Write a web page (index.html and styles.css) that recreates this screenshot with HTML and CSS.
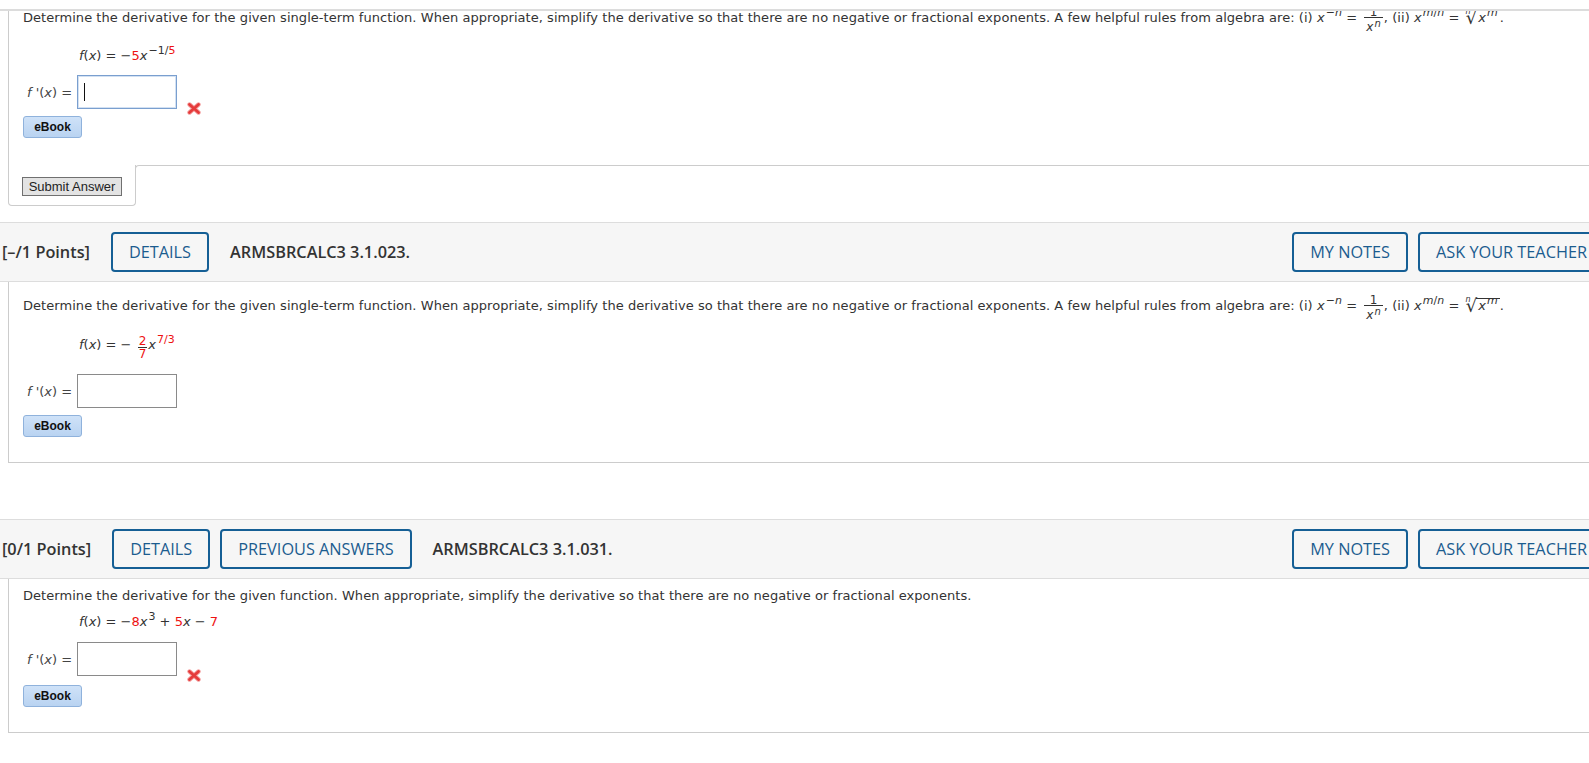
FILE: index.html
```html
<!DOCTYPE html>
<html>
<head>
<meta charset="utf-8">
<link rel="stylesheet" href="styles.css">
</head>
<body>
<div class="page">
  <div class="topline"></div>
  <div class="clip">
    <div class="q1">
      <div class="q1-body">
        <p class="qtext">Determine the derivative for the given single-term function. When appropriate, simplify the derivative so that there are no negative or fractional exponents. A few helpful rules from algebra are: (i) <i>x</i><span class="sup">−<i>n</i></span> = <span class="frac"><span class="num">1</span><span class="den"><i>x</i><span class="sup s2"><i>n</i></span></span></span>, (ii) <i>x</i><span class="sup"><i>m</i>/<i>n</i></span> = <span class="root"><span class="idx"><i>n</i></span><span class="rsign">√</span><span class="rad plain"><i>x</i><span class="sup"><i>m</i></span></span></span>.</p>
        <div class="fx"><i>f</i>(<i>x</i>) = −<span class="red">5</span><i>x</i><span class="sup">−1/<span class="red">5</span></span></div>
        <div class="answer">
          <span class="lbl"><i>f</i> '(<i>x</i>) =</span>
          <span class="field"><input class="inp focus" type="text"><span class="caret"></span></span>
          <svg class="wrong" width="14" height="13" viewBox="0 0 14 13"><path d="M2.5 2.5 L11.5 10.5 M11.5 2.5 L2.5 10.5" stroke="#f4a0a0" stroke-width="4.4" stroke-linecap="round"/><path d="M2.5 2.5 L11.5 10.5 M11.5 2.5 L2.5 10.5" stroke="#e53b3b" stroke-width="2.8" stroke-linecap="round"/></svg>
        </div>
        <button class="ebook">eBook</button>
      </div>
      <div class="submit-row">
        <div class="tab"><button class="submit">Submit Answer</button></div>
        <div class="filler"></div>
      </div>
    </div>
  </div>

  <div class="qhead">
    <span class="pts">[–/1 Points]</span>
    <span class="btns"><span class="hbtn">DETAILS</span></span>
    <span class="title">ARMSBRCALC3 3.1.023.</span>
    <span class="right"><span class="hbtn">MY NOTES</span><span class="hbtn">ASK YOUR TEACHER</span></span>
  </div>
  <div class="qbody sec2">
    <p class="qtext">Determine the derivative for the given single-term function. When appropriate, simplify the derivative so that there are no negative or fractional exponents. A few helpful rules from algebra are: (i) <i>x</i><span class="sup">−<i>n</i></span> = <span class="frac"><span class="num">1</span><span class="den"><i>x</i><span class="sup s2"><i>n</i></span></span></span>, (ii) <i>x</i><span class="sup"><i>m</i>/<i>n</i></span> = <span class="root"><span class="idx"><i>n</i></span><span class="rsign">√</span><span class="rad"><i>x</i><span class="sup"><i>m</i></span></span></span>.</p>
    <div class="fx"><i>f</i>(<i>x</i>) = − <span class="frac big"><span class="num red">2</span><span class="den red">7</span></span><i>x</i><span class="sup red">7/3</span></div>
    <div class="answer">
      <span class="lbl"><i>f</i> '(<i>x</i>) =</span>
      <span class="field"><input class="inp" type="text"></span>
    </div>
    <button class="ebook">eBook</button>
  </div>

  <div class="qhead second">
    <span class="pts">[0/1 Points]</span>
    <span class="btns"><span class="hbtn">DETAILS</span><span class="hbtn">PREVIOUS ANSWERS</span></span>
    <span class="title">ARMSBRCALC3 3.1.031.</span>
    <span class="right"><span class="hbtn">MY NOTES</span><span class="hbtn">ASK YOUR TEACHER</span></span>
  </div>
  <div class="qbody sec3">
    <p class="qtext">Determine the derivative for the given function. When appropriate, simplify the derivative so that there are no negative or fractional exponents.</p>
    <div class="fx"><i>f</i>(<i>x</i>) = −<span class="red">8</span><i>x</i><span class="sup">3</span> + <span class="red">5</span><i>x</i> − <span class="red">7</span></div>
    <div class="answer">
      <span class="lbl"><i>f</i> '(<i>x</i>) =</span>
      <span class="field"><input class="inp" type="text"></span>
      <svg class="wrong" width="14" height="13" viewBox="0 0 14 13"><path d="M2.5 2.5 L11.5 10.5 M11.5 2.5 L2.5 10.5" stroke="#f4a0a0" stroke-width="4.4" stroke-linecap="round"/><path d="M2.5 2.5 L11.5 10.5 M11.5 2.5 L2.5 10.5" stroke="#e53b3b" stroke-width="2.8" stroke-linecap="round"/></svg>
    </div>
    <button class="ebook">eBook</button>
  </div>
</div>
</body>
</html>
```

FILE: styles.css
```css
html, body {
  margin: 0;
  padding: 0;
  overflow: hidden;
  background: #fff;
}
.page {
  width: 1609px;
  font-family: "DejaVu Sans", Verdana, sans-serif;
  font-size: 13px;
  color: #333;
}
.topline {
  margin-top: 9px;
  height: 2px;
  background: #dcdcdc;
}
.clip {
  overflow: hidden;
  margin-bottom: 16px;
}
.q1 {
  margin-left: 8px;
}
.q1-body {
  margin-top: -17px;
  border-left: 1px solid #ccc;
  padding: 14px 0 27px 14px;
}
.qtext {
  margin: 0;
  line-height: 16px;
  letter-spacing: 0.05px;
}
.sup {
  font-size: 11px;
  vertical-align: 6px;
  line-height: 0;
  margin-left: 1px;
}
.sup.s2 {
  vertical-align: 4px;
  font-size: 10px;
}
.frac {
  display: inline-flex;
  flex-direction: column;
  align-items: center;
  vertical-align: 6px;
  font-size: 12px;
  margin: 0 1px 0 3px;
}
.frac .num {
  line-height: 9px;
  padding: 0 2px;
}
.frac .den {
  border-top: 1px solid #333;
  line-height: 14px;
  padding: 2px 2px 0;
}
.frac.big {
  font-size: 12px;
  vertical-align: 4px;
  margin: 0 1px 0 2px;
}
.frac.big .num { line-height: 11px; padding: 0 1px; }
.frac.big .den { line-height: 11px; padding: 1px 1px 0; border-top-color: #333; }
.root {
  white-space: nowrap;
  margin-left: 2px;
}
.idx {
  font-size: 8px;
  vertical-align: 8px;
  line-height: 0;
  margin-right: -5px;
}
.rsign {
  font-size: 18px;
  line-height: 0;
  vertical-align: -2px;
  margin-right: -1px;
}
.rad {
  border-top: 1px solid #333;
  padding: 0 2px 0 2px;
  line-height: 14px;
  display: inline-block;
}
.rad.plain {
  border-top-color: transparent;
}
.red {
  color: #ee1111;
}
.fx {
  margin-top: 14px;
  padding-left: 56px;
  line-height: 16px;
}
.answer {
  display: flex;
  align-items: center;
  margin-top: 11px;
  padding-left: 4px;
}
.sec2 .answer {
  margin-top: 14px;
}
.lbl {
  margin-right: 5px;
  color: #444;
}
.field {
  position: relative;
  display: block;
}
.inp {
  display: block;
  box-sizing: border-box;
  width: 100px;
  height: 34px;
  margin: 0;
  border: 1px solid #8a8a8a;
  background: #fff;
  padding: 0 6px;
  font: 13px "DejaVu Sans", sans-serif;
  outline: none;
}
.inp.focus {
  border-color: #7a9fcf;
  box-shadow: inset 0 0 0 1px #d3e1f2;
}
.caret {
  position: absolute;
  left: 7px;
  top: 8px;
  width: 1px;
  height: 18px;
  background: #111;
}
.wrong {
  align-self: flex-end;
  margin-left: 10px;
  margin-bottom: -6px;
}
.ebook {
  display: block;
  margin-top: 7px;
  box-sizing: border-box;
  width: 59px;
  height: 22px;
  padding: 0;
  border: 1px solid #8fb2dc;
  border-radius: 3px;
  background: linear-gradient(#cfe2f8, #b9d3f1);
  font: bold 12px "Liberation Sans", Arial, sans-serif;
  color: #111;
}
.sec3 .ebook {
  margin-top: 9px;
}
.submit-row {
  display: flex;
}
.tab {
  box-sizing: border-box;
  width: 128px;
  border: 1px solid #ccc;
  border-top: none;
  border-radius: 0 0 4px 4px;
  padding: 12px 0 9px 13px;
}
.filler {
  flex: 1;
  align-self: flex-start;
  height: 10px;
  margin-left: -1px;
  border-top: 1px solid #ccc;
  border-left: 1px solid #ccc;
  border-top-left-radius: 4px;
}
.submit {
  display: block;
  box-sizing: border-box;
  width: 100px;
  height: 19px;
  padding: 0;
  border: 1px solid #707070;
  background: #e3e3e3;
  font: 13px "Liberation Sans", Arial, sans-serif;
  color: #222;
}
.qhead {
  box-sizing: border-box;
  height: 60px;
  display: flex;
  align-items: center;
  gap: 21px;
  padding: 0 4px 0 2px;
  border-top: 1px solid #dddddd;
  border-bottom: 1px solid #dddddd;
  background: #f6f6f6;
  font-family: "Open Sans", sans-serif;
  font-size: 16.3px;
  color: #333;
}
.qhead.second {
  margin-top: 56px;
}
.pts, .title {
  font-weight: 600;
}
.btns, .right {
  display: flex;
  gap: 10px;
}
.right {
  margin-left: auto;
}
.hbtn {
  box-sizing: border-box;
  height: 40px;
  display: flex;
  align-items: center;
  padding: 0 16px;
  border: 2px solid #155f95;
  border-radius: 4px;
  color: #1b5c8f;
}
.qbody {
  margin-left: 8px;
  border-left: 1px solid #ccc;
  border-bottom: 1px solid #ccc;
  padding: 14px 0 25px 14px;
}
.qbody.sec3 {
  padding-top: 9px;
}
.sec3 .fx {
  margin-top: 10px;
}
.sec3 .answer {
  margin-top: 12px;
}
```
